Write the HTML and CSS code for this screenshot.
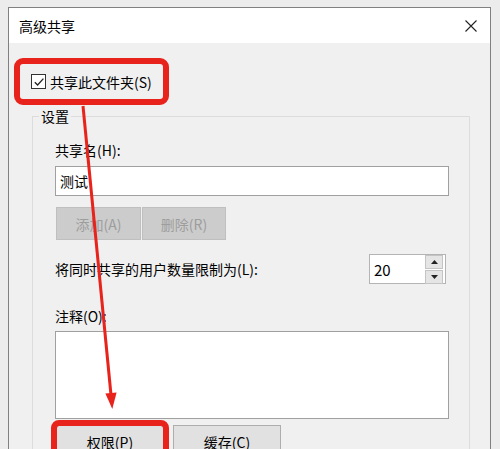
FILE: index.html
```html
<!DOCTYPE html>
<html lang="zh-CN">
<head>
<meta charset="utf-8">
<title>高级共享</title>
<link rel="stylesheet" href="styles.css">
</head>
<body>
<div class="window">
  <div class="titlebar">
    <span class="title">高级共享</span>
    <svg class="close" width="12" height="12" viewBox="0 0 12 12"><path d="M0.5 0.5 L11.5 11.5 M11.5 0.5 L0.5 11.5" stroke="#222" stroke-width="1.1" fill="none"/></svg>
  </div>
  <div class="content">
    <label class="share-row hl">
      <span class="checkbox"><svg width="12" height="12" viewBox="0 0 12 12"><path d="M1.8 6.2 L4.6 9 L10.4 2.6" stroke="#222" stroke-width="1.3" fill="none"/></svg></span>
      <span>共享此文件夹(S)</span>
    </label>
    <fieldset class="group">
      <legend>设置</legend>
      <div class="group-body">
        <div class="label">共享名(H):</div>
        <div class="field">测试</div>
        <div class="btn-row">
          <span class="btn disabled add">添加(A)</span>
          <span class="btn disabled del">删除(R)</span>
        </div>
        <div class="limit-row">
          <span>将同时共享的用户数量限制为(L):</span>
          <div class="spinner">
            <span class="spin-val">20</span>
            <div class="spin-btns">
              <span class="spin-btn"><svg width="7" height="4" viewBox="0 0 7 4"><path d="M0 4 L3.5 0 L7 4 Z" fill="#222"/></svg></span>
              <span class="spin-btn"><svg width="7" height="4" viewBox="0 0 7 4"><path d="M0 0 L3.5 4 L7 0 Z" fill="#222"/></svg></span>
            </div>
          </div>
        </div>
        <div class="label note-label">注释(O):</div>
        <div class="textarea"></div>
        <div class="btn-row bottom">
          <span class="btn big hl">权限(P)</span>
          <span class="btn big">缓存(C)</span>
        </div>
      </div>
    </fieldset>
  </div>
</div>
<svg class="arrow" width="500" height="449" viewBox="0 0 500 449">
  <line x1="83" y1="106" x2="111" y2="395" stroke="#e8231c" stroke-width="3"/>
  <polygon points="112.3,409 116.6,392.4 105.4,393.6" fill="#e8231c"/>
</svg>
</body>
</html>
```

FILE: styles.css
```css
html, body {
  margin: 0;
  padding: 0;
}
body {
  width: 500px;
  height: 449px;
  overflow: hidden;
  position: relative;
  background: #ececec;
  font-family: "Noto Sans CJK SC", "Noto Sans", sans-serif;
  font-size: 14px;
  color: #000;
}
.window {
  margin: 7px 0 0 8px;
  width: 481px;
  height: 460px;
  border: 1px solid #808080;
  border-bottom: none;
  background: #f0f0f0;
}
.titlebar {
  height: 35px;
  background: #fff;
  display: flex;
  align-items: center;
  justify-content: space-between;
  padding: 0 13px 0 10px;
}
.title {
  line-height: 20px;
}
.content {
  display: flex;
  flex-direction: column;
  align-items: flex-start;
}
.hl {
  outline: 6px solid #e8231c;
  outline-offset: -1px;
  border-radius: 3px;
}
.share-row {
  margin: 21px 0 0 11px;
  width: 132px;
  height: 35px;
  padding-left: 11px;
  display: flex;
  align-items: center;
  gap: 4px;
  line-height: 20px;
}
.share-row.hl {
  outline-offset: 0;
}
.checkbox {
  width: 13px;
  height: 13px;
  border: 1px solid #333;
  background: #fff;
  display: flex;
  align-items: center;
  justify-content: center;
}
.group {
  margin: 7px 0 0 23px;
  padding: 0;
  width: 436px;
  border: 1px solid #dcdcdc;
  box-sizing: content-box;
}
.group legend {
  margin-left: 6px;
  padding: 0 2px;
  line-height: 20px;
}
.group-body {
  padding: 14px 20px 0 22px;
  display: flex;
  flex-direction: column;
}
.label {
  line-height: 20px;
}
.field {
  margin-top: 6px;
  height: 28px;
  border: 1px solid #a0a0a0;
  background: #fff;
  padding-left: 4px;
  line-height: 28px;
}
.btn-row {
  display: flex;
  margin-top: 11px;
  gap: 1px;
  padding-left: 1px;
}
.btn {
  display: flex;
  align-items: center;
  justify-content: center;
  height: 31px;
  border: 1px solid #adadad;
  background: #e1e1e1;
  box-sizing: content-box;
}
.btn.disabled {
  background: #cccccc;
  border-color: #bfbfbf;
  color: #9d9d9d;
}
.btn.add { width: 83px; }
.btn.del { width: 82px; }
.limit-row {
  margin-top: 14px;
  display: flex;
  align-items: center;
  justify-content: space-between;
  height: 30px;
  padding-right: 3px;
}
.spinner {
  width: 73px;
  height: 28px;
  border: 1px solid #b4b4b4;
  background: #fff;
  display: flex;
  align-items: center;
  justify-content: space-between;
  padding-right: 2px;
}
.spin-val {
  padding-left: 4px;
  font-size: 15px;
}
.spin-btns {
  display: flex;
  flex-direction: column;
  gap: 1px;
}
.spin-btn {
  width: 16px;
  height: 12px;
  background: #e5e5e5;
  border: 1px solid #c4c4c4;
  display: flex;
  align-items: center;
  justify-content: center;
}
.note-label {
  margin-top: 22px;
}
.textarea {
  margin-top: 5px;
  height: 86px;
  border: 1px solid #a0a0a0;
  background: #fff;
}
.btn-row.bottom {
  margin-top: 6px;
  gap: 9px;
}
.btn.big {
  width: 106px;
}
.arrow {
  position: absolute;
  left: 0;
  top: 0;
  pointer-events: none;
}
```
